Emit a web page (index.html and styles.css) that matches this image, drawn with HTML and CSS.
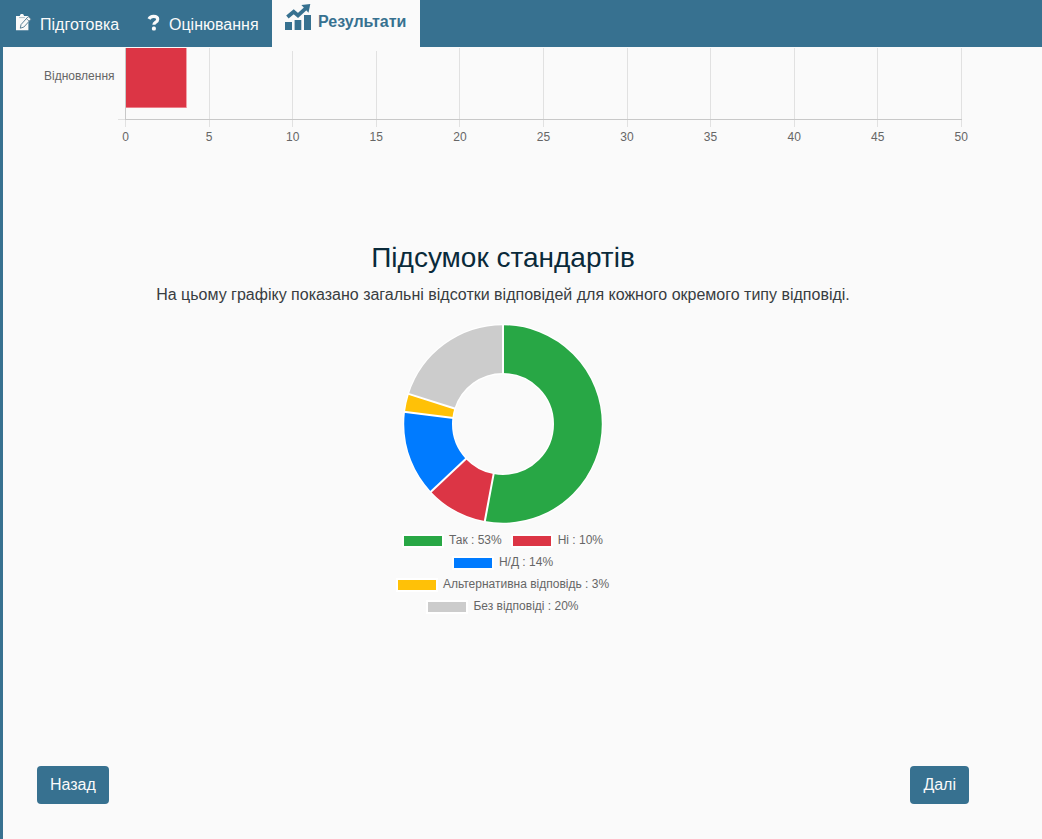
FILE: index.html
```html
<!DOCTYPE html>
<html lang="uk">
<head>
<meta charset="utf-8">
<title>Результати</title>
<link rel="stylesheet" href="styles.css">
</head>
<body>
<nav class="tabs">
  <a class="tab tab-prep"><svg class="icon-prep" width="17" height="17" viewBox="0 0 17 17"><path d="M1 2h3.8a2 2 0 0 1 4.2 0h4.4v14.2H1z" fill="#fafafa"/><path d="M4 3.6h5.8" stroke="#a9b9c1" stroke-width=".9"/><path d="m13.2 2.6 2.9 2.5-7.3 8-3.5 1.1.7-3.6z" fill="#fafafa" stroke="#5d8298" stroke-width="1"/><path d="m11.4 4.7 2.8 2.4" stroke="#5d8298" stroke-width=".8"/></svg><span>Підготовка</span></a>
  <a class="tab tab-assess"><svg class="icon-question" width="13" height="17" viewBox="0 0 13 17"><path d="M2 5C2.8 3.2 4.3 2.3 6.5 2.3c2.7 0 4.2 1 4.2 2.9 0 1.5-.8 2.3-2.2 3.1-1.1.6-1.6 1.1-1.6 2.5" fill="none" stroke="#fafafa" stroke-width="3.2"/><rect x="4.9" y="12.6" width="4" height="3.9" rx="1.6" fill="#fafafa"/></svg><span>Оцінювання</span></a>
  <a class="tab tab-active"><svg width="27" height="27" viewBox="0 0 27 27"><path d="M0 18h7v8H0zM9.6 16h6.7v10H9.6zM19 11h7v15h-7z" fill="#377190"/><path d="m2.4 13 6.3-5.3 4.3 3.7L21 4.2" fill="none" stroke="#377190" stroke-width="3.8"/><path d="m16.4 1 8.9-1-1.8 8.7z" fill="#377190"/></svg><span>Результати</span></a>
</nav>
<main class="page">
  <svg class="bar-chart" width="1000" height="104" viewBox="0 47 1000 104">
    <path class="grid" d="M209.5 48v79M292.5 51v76M376.5 51v76M459.5 48v79M543.5 48v79M627.5 48v79M710.5 48v79M794.5 48v79M877.5 48v79M961.5 48v79M118 119.5h8M125.5 120v7"/>
    <path class="axis" d="M125.5 48v72M125 119.5h837"/>
    <rect x="126" y="48" width="60.7" height="60" fill="#eb7e89"/>
    <rect x="126" y="48" width="60" height="59" fill="#dc3545"/>
    <text x="114.5" y="80" text-anchor="end">Відновлення</text>
    <g text-anchor="middle"><text x="125.5" y="141">0</text><text x="209" y="141">5</text><text x="292.7" y="141">10</text><text x="376.3" y="141">15</text><text x="459.9" y="141">20</text><text x="543.4" y="141">25</text><text x="627" y="141">30</text><text x="710.5" y="141">35</text><text x="794.2" y="141">40</text><text x="877.7" y="141">45</text><text x="961.3" y="141">50</text></g>
  </svg>
  <section class="summary">
    <h2>Підсумок стандартів</h2>
    <p>На цьому графіку показано загальні відсотки відповідей для кожного окремого типу відповіді.</p>
    <svg class="donut" width="202" height="202" viewBox="-101 -101 202 202">
      <circle r="74.8" fill="none" stroke="#fff" stroke-width="50.4"/>
      <g class="slices" transform="rotate(-90)">
        <circle r="74.9" pathLength="100" stroke="#28a745" stroke-dasharray="53 100"/>
        <circle r="74.9" pathLength="100" stroke="#dc3545" stroke-dasharray="10 100" stroke-dashoffset="-53"/>
        <circle r="74.9" pathLength="100" stroke="#007bff" stroke-dasharray="13.9 100" stroke-dashoffset="-63"/>
        <circle r="74.9" pathLength="100" stroke="#ffc107" stroke-dasharray="3 100" stroke-dashoffset="-76.9"/>
        <circle r="74.9" pathLength="100" stroke="#ccc" stroke-dasharray="20.1 100" stroke-dashoffset="-79.9"/>
      </g>
      <g stroke="#fff" stroke-width="2"><path d="M0-50V-100"/><path d="M0-50V-100" transform="rotate(190.6)"/><path d="M0-50V-100" transform="rotate(226.8)"/><path d="M0-50V-100" transform="rotate(277)"/><path d="M0-50V-100" transform="rotate(287.7)"/></g>
    </svg>
    <div class="legend">
      <div class="legend-row"><span class="key"><i class="swatch yes"></i>Так : 53%</span><span class="key"><i class="swatch no"></i>Ні : 10%</span></div>
      <div class="legend-row"><span class="key"><i class="swatch na"></i>Н/Д : 14%</span></div>
      <div class="legend-row"><span class="key"><i class="swatch alt"></i>Альтернативна відповідь : 3%</span></div>
      <div class="legend-row"><span class="key"><i class="swatch none"></i>Без відповіді : 20%</span></div>
    </div>
  </section>
  <div class="actions"><button class="btn">Назад</button><button class="btn">Далі</button></div>
</main>
</body>
</html>
```
FILE: styles.css
```css
* { box-sizing: border-box; }
body {
  margin: 0;
  height: 839px;
  overflow: hidden;
  display: flex;
  flex-direction: column;
  background: #fafafa;
  color: #383d41;
  font: 16px/24px "Liberation Sans", Arial, sans-serif;
}
.tabs { display: flex; height: 47px; background: #377190; }
.tab { display: flex; align-items: flex-start; color: #fafafa; white-space: nowrap; }
.tab-prep { width: 132px; padding: 13px 0 0 15px; gap: 8px; }
.tab-assess { width: 140px; padding: 13px 0 0 15px; gap: 9px; }
.icon-prep { margin-top: 1px; }
.icon-question { margin-top: 1px; }
.tab-active { width: 148px; padding: 4px 0 0 13px; gap: 6px; background: #fafafa; color: #377190; font-weight: bold; }
.tab-active span { margin-top: 6px; }
.page { flex: 1; display: flex; flex-direction: column; border-left: 3px solid #377190; }
.bar-chart { display: block; flex: none; margin-left: -3px; font-size: 12px; }
.bar-chart text { fill: #666; }
.grid { fill: none; stroke: #e1e1e1; }
.axis { fill: none; stroke: #c8c8c8; }
.summary { width: 1000px; padding-top: 90px; display: flex; flex-direction: column; align-items: center; }
h2 { margin: 0 0 8px; color: #0a2a3a; font-size: 28px; line-height: 34px; font-weight: 400; }
p { margin: 0; }
.donut { display: block; margin-top: 16px; }
.slices circle { fill: none; stroke-width: 47.8; }
.legend { margin: 4px 1px 0 0; color: #666; font-size: 12px; line-height: 22px; }
.legend-row { display: flex; justify-content: center; gap: 9px; height: 22px; }
.key { display: flex; align-items: center; gap: 5px; white-space: nowrap; }
.swatch { width: 42px; height: 14px; margin-top: 2px; border: 2px solid #fff; }
.yes { background: #28a745; }
.no { background: #dc3545; }
.na { background: #007bff; }
.alt { background: #ffc107; }
.none { background: #ccc; }
.actions { display: flex; justify-content: space-between; margin-top: auto; padding: 0 73px 35px 34px; }
.btn { height: 38px; padding: 0 13px; border: 0; border-radius: 4px; background: #377190; color: #fafafa; font: inherit; }
```
